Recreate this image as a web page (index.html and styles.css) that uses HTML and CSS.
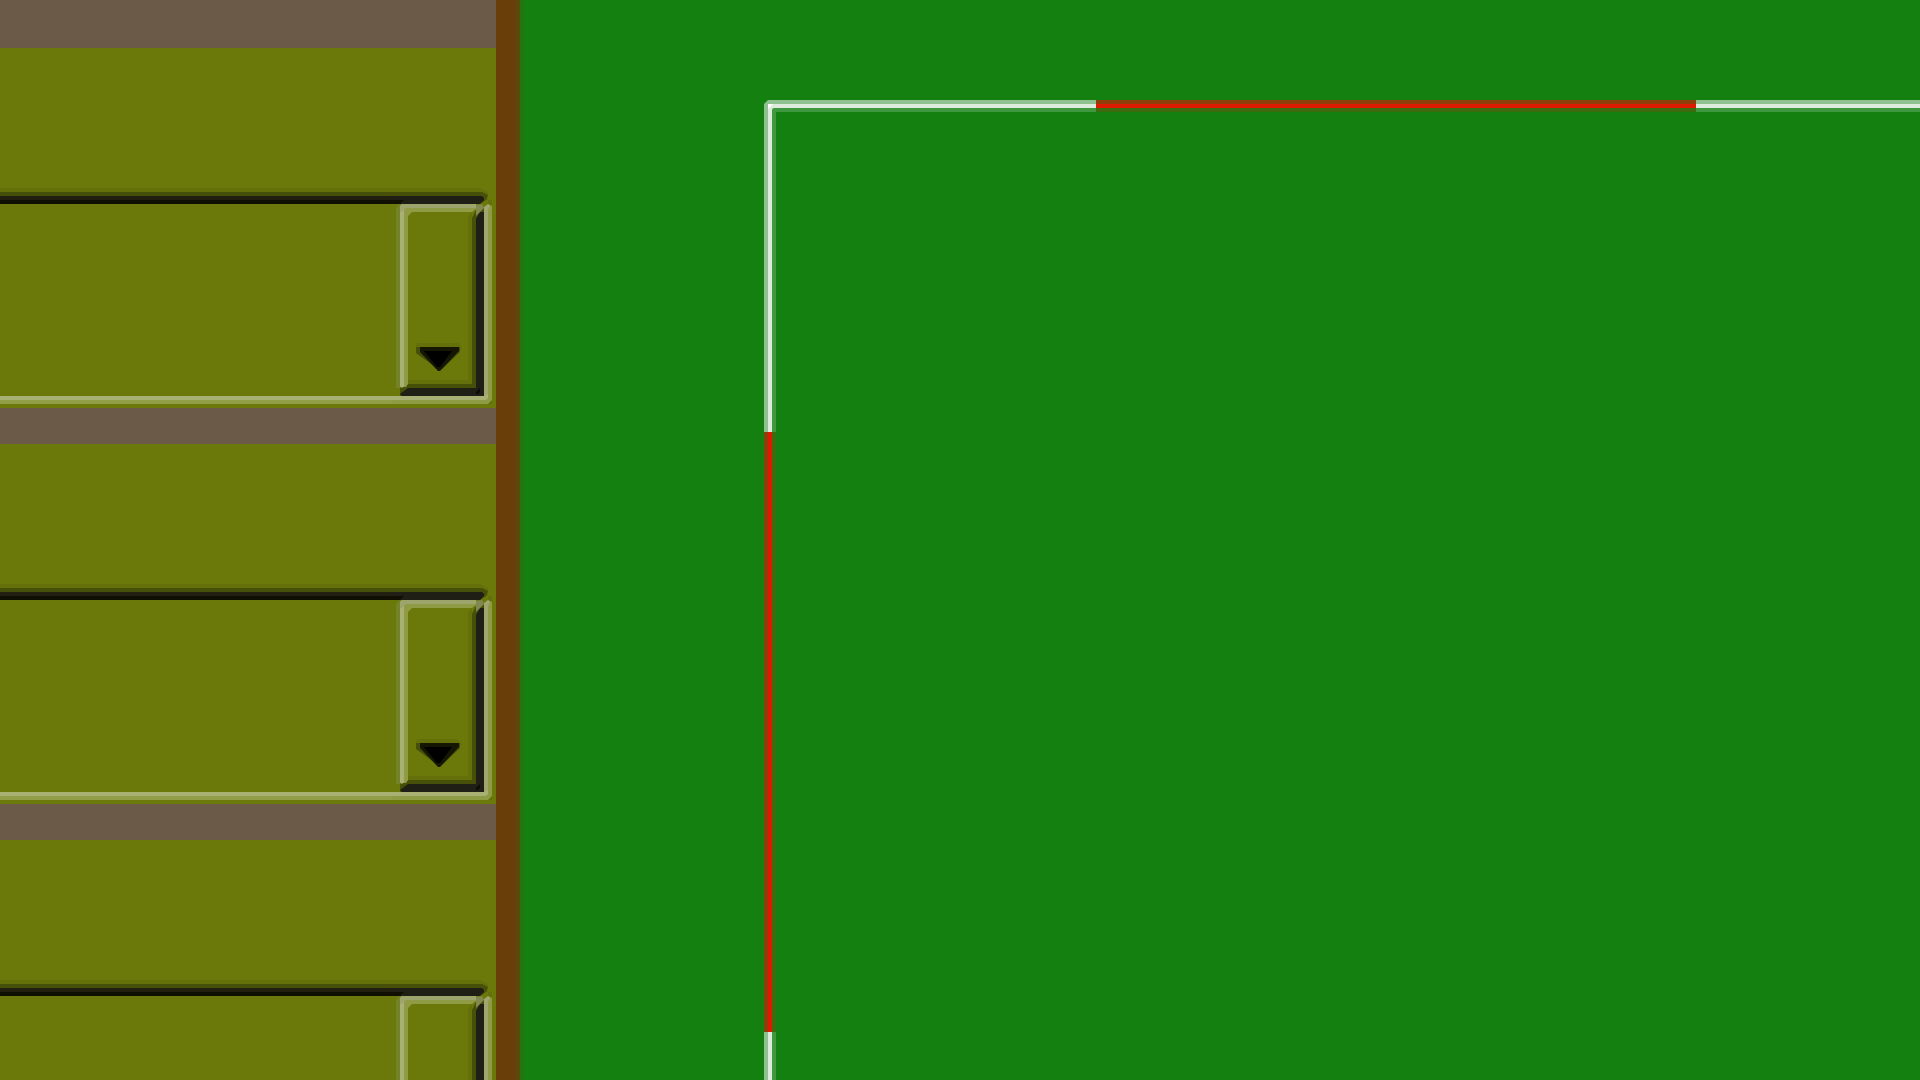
FILE: index.html
```html
<!DOCTYPE html>
<html lang="en">
<head>
<meta charset="utf-8">
<meta name="viewport" content="width=device-width, initial-scale=1">
<link rel="stylesheet" href="styles.css">
</head>
<body>
<svg width="0" height="0" class="defs" aria-hidden="true">
  <symbol id="drop" viewBox="0 0 100 216">
    <!-- soft outer rims -->
    <path fill="#64710b" d="M0 0H88L96 4V12H100V216H96V12H0Z"/>
    <path fill="#74822a" d="M4 20L8 16V200H4Z"/>
    <path fill="#64710b" d="M76 28L80 24V196H16V192H76Z"/>
    <!-- field top edge -->
    <path fill="#465009" d="M0 4H90L96 7L94 12L88 16H0Z"/>
    <path fill="#201f15" d="M0 8H90L92 10V12L88 16H0Z"/>
    <path fill="#100f04" d="M0 12H12L8 16H0Z"/>
    <!-- button sides in shadow -->
    <path fill="#465009" d="M80 30L84 22L92 20V208H8V200L16 196H80Z"/>
    <path fill="#201f15" d="M84 31L88 24H92V208H10L8 206L16 200H84Z"/>
    <path fill="#0d0c08" d="M84 204L88 200V204L86 206H84Z"/>
    <!-- button sides in light -->
    <path fill="#8f9b45" d="M9 16H84L85 20L80 24H20L16 28V196L14 199H8V18Z"/>
    <path fill="#a9b073" d="M8 20H12V198L10 200L8 198Z"/>
    <path fill="#9da46c" d="M10 16H84V20H14L10 24H8V18Z"/>
    <path fill="#818953" d="M84 17L90 16L92 20L88 24L84 28Z"/>
    <!-- field right and bottom edges -->
    <path fill="#8e9b45" d="M96 16L100 18V212L96 216H0V212H94L96 208Z"/>
    <path fill="#a1a56e" d="M92 19L96 16L98 18L96 22V208H92Z"/>
    <path fill="#a9b073" d="M0 208H92L96 206V210L94 212H0Z"/>
    <!-- arrow -->
    <path fill="#64710b" d="M26 155H66L70 160L52 178L49 181H45L42 178L24 160V157Z"/>
    <path fill="#465009" d="M24 159H68V164L50 181H46L24 165Z"/>
    <path fill="#151703" d="M28 159H67L67 163L48 183H46L28 164Z"/>
    <path d="M32 163H60L48 179H45Z"/>
  </symbol>
</svg>
<aside class="sidebar">
  <section class="panel">
    <div class="field">
      <select class="choice" aria-label="Option 1"></select>
      <svg class="drop" aria-hidden="true"><use href="#drop"/></svg>
    </div>
  </section>
  <section class="panel">
    <div class="field">
      <select class="choice" aria-label="Option 2"></select>
      <svg class="drop" aria-hidden="true"><use href="#drop"/></svg>
    </div>
  </section>
  <section class="panel">
    <div class="field">
      <select class="choice" aria-label="Option 3"></select>
      <svg class="drop" aria-hidden="true"><use href="#drop"/></svg>
    </div>
  </section>
</aside>
<div class="divider"></div>
<main class="board">
  <div class="frame">
    <svg class="corner" viewBox="0 0 12 12" aria-hidden="true"><path fill="#8fc08f" d="M4 0H12V12H0V4Z"/><path fill="#dcebdb" d="M4 4H12V8H8V12H4Z"/><path fill="#fff" d="M4 4H9L4 9Z"/><path fill="#3f983d" d="M8 12V10L10 8H12V12Z"/></svg>
    <div class="line-top">
      <span class="seg plain"></span><span class="seg marked"></span><span class="seg plain rest"></span>
    </div>
    <div class="line-left">
      <span class="seg plain"></span><span class="seg marked"></span><span class="seg plain rest"></span>
    </div>
  </div>
</main>
</body>
</html>
```
FILE: styles.css
```css
* {
  box-sizing: border-box;
}

body {
  margin: 0;
  height: 100vh;
  display: flex;
  overflow: hidden;
  background: #148010;
  font-family: "Liberation Sans", Arial, sans-serif;
}

.defs {
  position: absolute;
}

.sidebar {
  flex: none;
  width: 496px;
  display: flex;
  flex-direction: column;
  gap: 36px;
  padding-top: 48px;
  background: #6b5a47;
}

.panel {
  flex: none;
  padding: 140px 4px 4px 0;
  background: #6b780a;
}

.divider {
  flex: none;
  width: 28px;
  background: linear-gradient(to right, #6a3e08 20px, #5c480a 20px 24px, #227611 24px);
}

/* Sunken field: dark along the top, light along the bottom */
.field {
  height: 216px;
  display: flex;
  background:
    linear-gradient(to bottom, #64710b 4px, #465009 4px 8px, #201f10 8px 12px, #100f04 12px) 0 0 / 100% 16px no-repeat,
    linear-gradient(to bottom, #a9b073 4px, #929e47 4px) 0 100% / 100% 8px no-repeat,
    #6b780a;
}

.choice {
  flex: 1;
  appearance: none;
  border: 0;
  padding: 0;
  background: transparent;
}

.drop {
  flex: none;
  width: 100px;
  height: 216px;
  background: #6b780a;
}

.board {
  flex: 1;
  display: flex;
  padding: 100px 0 0 240px;
}

.frame {
  flex: 1;
  display: grid;
  grid-template-columns: 12px 1fr;
  grid-template-rows: 12px 1fr;
}

.corner {
  width: 12px;
  height: 12px;
}

.line-top,
.line-left {
  display: flex;
}

.line-left {
  flex-direction: column;
}

.seg {
  flex: 0 0 320px;
}

.marked {
  flex-basis: 600px;
}

.rest {
  flex: 1;
}

.line-top .plain {
  background: linear-gradient(to bottom, #8fc08f 4px, #dcebdb 4px 8px, #3f983d 8px);
}

.line-left .plain {
  background: linear-gradient(to right, #8fc08f 4px, #dcebdb 4px 8px, #3f983d 8px);
}

.line-top .marked {
  background: linear-gradient(to bottom, #8f3d09 4px, #dd1900 4px 8px, #3d6b0f 8px);
}

.line-left .marked {
  background: linear-gradient(to right, #8f3d09 4px, #dd1900 4px 8px, #3d6b0f 8px);
}
```
